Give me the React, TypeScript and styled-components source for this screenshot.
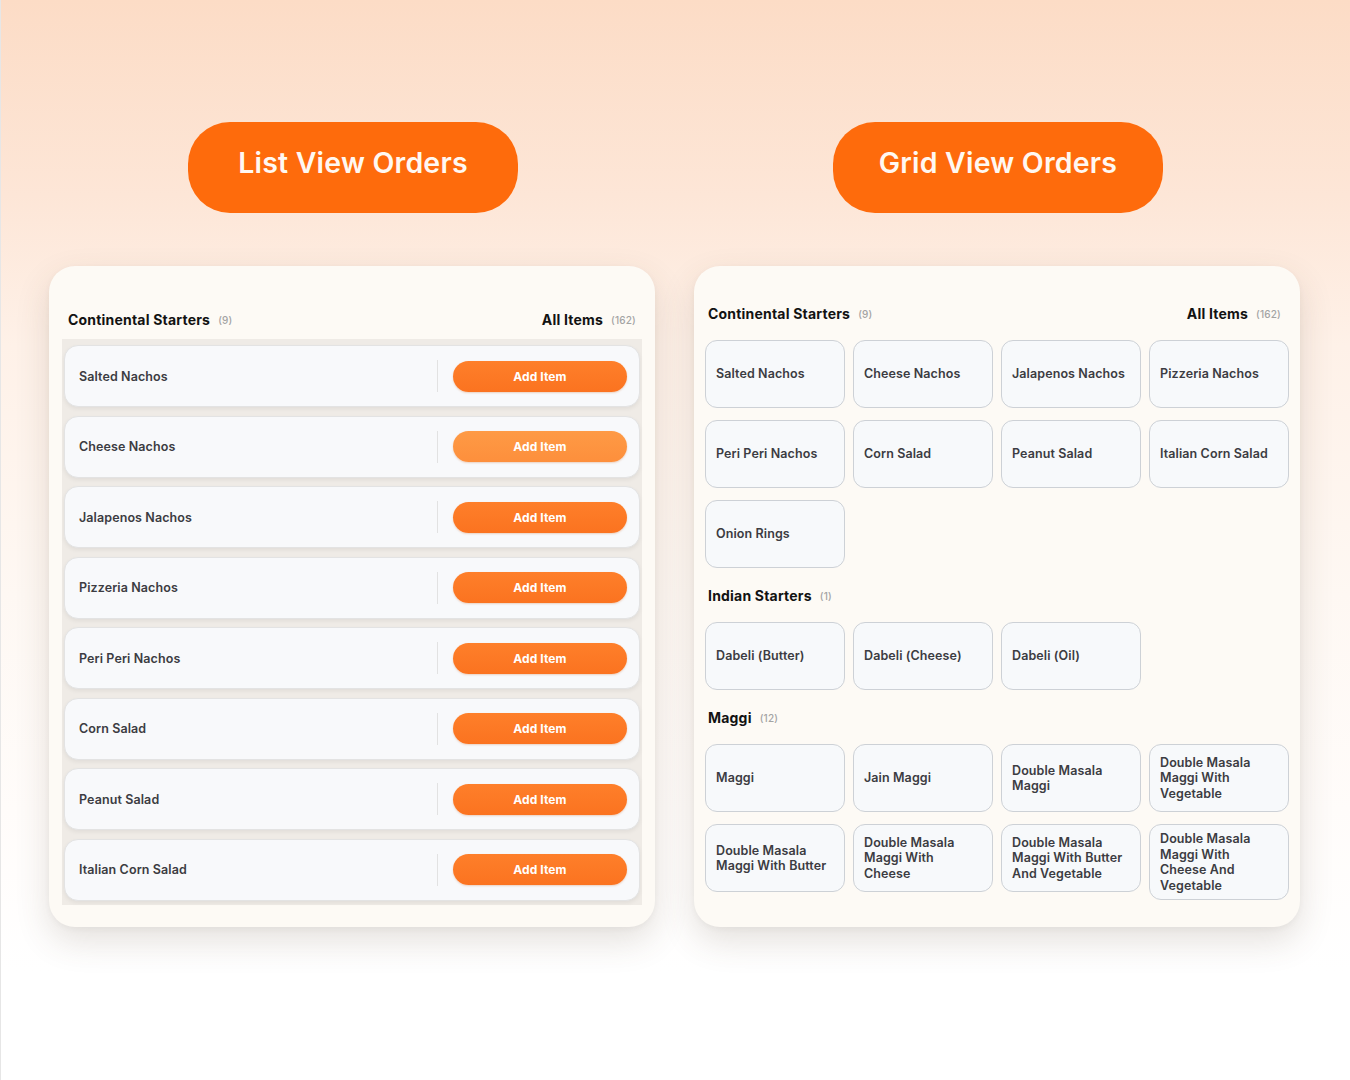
import React from "react";
import styled, { createGlobalStyle } from "styled-components";

const GlobalStyle = createGlobalStyle`
  * { box-sizing: border-box; }
  html, body { margin: 0; padding: 0; }
  body {
    font-family: Inter, "Open Sans", Roboto, sans-serif;
    background: #ffffff;
    -webkit-font-smoothing: antialiased;
  }
`;

const Page = styled.div`
  width: 1350px;
  height: 1080px;
  padding: 122px 50px 0 48px;
  border-left: 1px solid #e6e6e6;
  background: linear-gradient(
    180deg,
    #fcdcc6 0%,
    #fde6d7 18%,
    #fef1e8 32%,
    #fef8f3 55%,
    #fffcfa 75%,
    #ffffff 90%
  );
`;

const Columns = styled.div`
  display: grid;
  grid-template-columns: 606px 606px;
  column-gap: 39px;
`;

const Column = styled.div`
  display: flex;
  flex-direction: column;
  align-items: center;
  gap: 53px;
`;

const ViewPill = styled.div`
  width: 330px;
  height: 91px;
  border-radius: 42px;
  background: #fe6b0c;
  color: #fff8f2;
  display: flex;
  align-items: center;
  justify-content: center;
  font-size: 28.5px;
  font-weight: 600;
  letter-spacing: 0.2px;
  padding-bottom: 10px;
  transform: translateX(1px);
`;

const Card = styled.div<{ $pad: string }>`
  width: 606px;
  height: 661px;
  border-radius: 26px;
  background: #fdfaf5;
  box-shadow: 0 14px 34px rgba(90, 70, 50, 0.16), 0 2px 6px rgba(0, 0, 0, 0.04);
  padding: ${(p) => p.$pad};
  display: flex;
  flex-direction: column;
`;

const HeaderRow = styled.div<{ $inset: number; $below: number }>`
  height: 16px;
  display: flex;
  justify-content: space-between;
  align-items: center;
  padding: 0 ${(p) => p.$inset}px;
  margin-bottom: ${(p) => p.$below}px;
`;

const SectionTitle = styled.div`
  font-size: 14px;
  line-height: 16px;
  font-weight: 700;
  color: #121212;
  display: flex;
  align-items: center;
  gap: 8px;
  letter-spacing: 0.2px;
`;

const Count = styled.span`
  font-size: 10px;
  font-weight: 500;
  color: #a3a3a3;
`;

/* list view */

const ListArea = styled.div`
  background: #efebe6;
  padding: 6px 2px 4px;
  display: flex;
  flex-direction: column;
  gap: 8.5px;
  height: 566px;
`;

const ListRow = styled.div`
  height: 62px;
  border-radius: 14px;
  background: #f8f9fb;
  border: 1px solid #e3e3e3;
  box-shadow: 0 2px 4px rgba(0, 0, 0, 0.06);
  display: flex;
  align-items: center;
  padding: 0 12px 0 14px;
`;

const RowName = styled.div`
  flex: 1;
  font-size: 12.5px;
  font-weight: 600;
  color: #3c3c42;
  letter-spacing: 0.1px;
`;

const Divider = styled.div`
  width: 1px;
  height: 32px;
  background: #e2e2e2;
  margin-right: 15px;
`;

const AddButton = styled.button<{ $soft?: boolean }>`
  width: 174px;
  height: 31px;
  border-radius: 16px;
  border: none;
  background: ${(p) =>
    p.$soft
      ? "linear-gradient(180deg, #fe9a45 0%, #fd8f3c 100%)"
      : "linear-gradient(180deg, #fe7f2a 0%, #fb7320 100%)"};
  box-shadow: 0 1px 2px rgba(200, 90, 20, 0.25);
  color: #fff;
  font-family: inherit;
  font-size: 12px;
  font-weight: 700;
  letter-spacing: 0.1px;
`;

/* grid view */

const Section = styled.div`
  display: flex;
  flex-direction: column;
`;

const TileGrid = styled.div`
  display: grid;
  grid-template-columns: repeat(4, 140px);
  column-gap: 8px;
  row-gap: 12px;
  align-items: start;
  margin-bottom: 20px;
`;

const Tile = styled.div`
  min-height: 68px;
  border-radius: 12px;
  background: #f7f9fb;
  border: 1.5px solid #cdd1d6;
  display: flex;
  align-items: center;
  padding: 6px 10px;
  font-size: 12.5px;
  font-weight: 600;
  line-height: 15.5px;
  color: #3c3c42;
  letter-spacing: 0.1px;
  white-space: pre-line;
`;

const listItems = [
  "Salted Nachos",
  "Cheese Nachos",
  "Jalapenos Nachos",
  "Pizzeria Nachos",
  "Peri Peri Nachos",
  "Corn Salad",
  "Peanut Salad",
  "Italian Corn Salad",
];

const sections = [
  {
    title: "Continental Starters",
    count: 9,
    items: [
      "Salted Nachos",
      "Cheese Nachos",
      "Jalapenos Nachos",
      "Pizzeria Nachos",
      "Peri Peri Nachos",
      "Corn Salad",
      "Peanut Salad",
      "Italian Corn Salad",
      "Onion Rings",
    ],
  },
  {
    title: "Indian Starters",
    count: 1,
    items: ["Dabeli (Butter)", "Dabeli (Cheese)", "Dabeli (Oil)"],
  },
  {
    title: "Maggi",
    count: 12,
    items: [
      "Maggi",
      "Jain Maggi",
      "Double Masala\nMaggi",
      "Double Masala\nMaggi With\nVegetable",
      "Double Masala\nMaggi With Butter",
      "Double Masala\nMaggi With\nCheese",
      "Double Masala\nMaggi With Butter\nAnd Vegetable",
      "Double Masala\nMaggi With\nCheese And\nVegetable",
    ],
  },
];

export default function App() {
  return (
    <>
      <GlobalStyle />
      <Page>
        <Columns>
          <Column>
            <ViewPill>List View Orders</ViewPill>
            <Card $pad="46px 13px 22px">
              <HeaderRow $inset={6} $below={11}>
                <SectionTitle>
                  Continental Starters <Count>(9)</Count>
                </SectionTitle>
                <SectionTitle>
                  All Items <Count>(162)</Count>
                </SectionTitle>
              </HeaderRow>
              <ListArea>
                {listItems.map((name, i) => (
                  <ListRow key={name}>
                    <RowName>{name}</RowName>
                    <Divider />
                    <AddButton $soft={i === 1}>Add Item</AddButton>
                  </ListRow>
                ))}
              </ListArea>
            </Card>
          </Column>
          <Column>
            <ViewPill>Grid View Orders</ViewPill>
            <Card $pad="40px 12px 20px 11px">
              {sections.map((s, i) => (
                <Section key={s.title}>
                  <HeaderRow $inset={3} $below={18}>
                    <SectionTitle>
                      {s.title} <Count>({s.count})</Count>
                    </SectionTitle>
                    {i === 0 && (
                      <SectionTitle style={{ marginRight: 4 }}>
                        All Items <Count>(162)</Count>
                      </SectionTitle>
                    )}
                  </HeaderRow>
                  <TileGrid>
                    {s.items.map((it) => (
                      <Tile key={it}>{it}</Tile>
                    ))}
                  </TileGrid>
                </Section>
              ))}
            </Card>
          </Column>
        </Columns>
      </Page>
    </>
  );
}
